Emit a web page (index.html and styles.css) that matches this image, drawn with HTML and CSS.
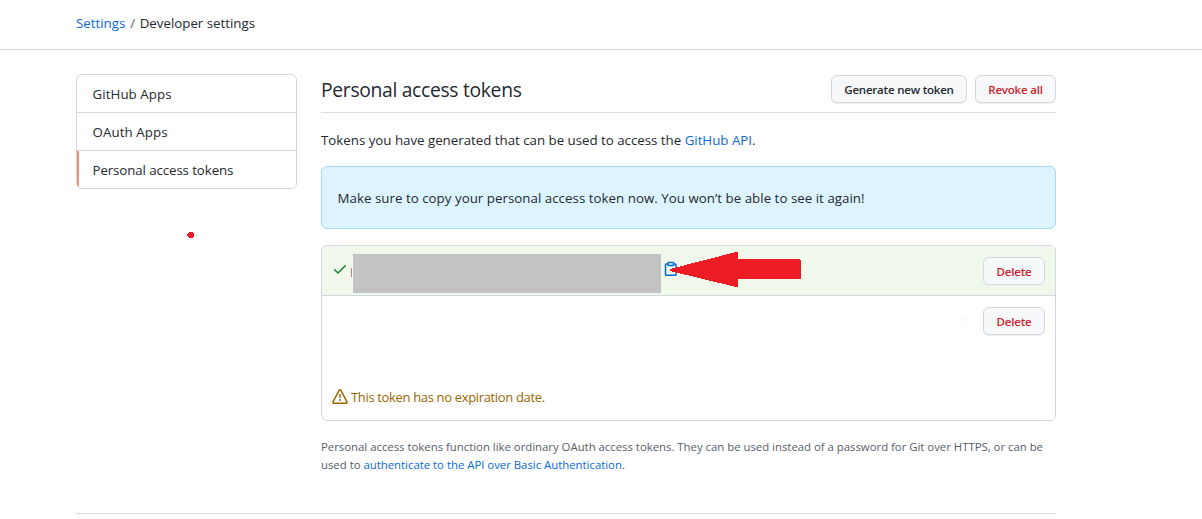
FILE: index.html
```html
<!DOCTYPE html>
<html lang="en">
<head>
<meta charset="utf-8">
<title>Personal access tokens</title>
<link rel="stylesheet" href="styles.css">
</head>
<body>
<header class="crumbs"><a class="crumb-link">Settings</a><span class="slash">/</span><span class="crumb-current">Developer settings</span></header>
<div class="layout">
  <nav class="menu">
    <a class="menu-item">GitHub Apps</a>
    <a class="menu-item">OAuth Apps</a>
    <a class="menu-item selected">Personal access tokens</a>
  </nav>
  <main class="content">
    <div class="subhead">
      <h2 class="title"><span>Personal access tokens</span></h2>
      <div class="actions">
        <button class="btn generate">Generate new token</button>
        <button class="btn danger revoke">Revoke all</button>
      </div>
    </div>
    <p class="intro"><span>Tokens you have generated that can be used to access the <a>GitHub API</a>.</span></p>
    <div class="flash"><span>Make sure to copy your personal access token now. You won’t be able to see it again!</span></div>
    <div class="tokens">
      <div class="token new">
        <svg class="check" width="16" height="16" viewBox="0 0 16 16"><path fill="#1a7f37" d="M13.78 4.22a.75.75 0 010 1.06l-7.25 7.25a.75.75 0 01-1.06 0L2.22 9.28a.75.75 0 011.06-1.06L6 10.94l6.72-6.72a.75.75 0 011.06 0z"/></svg>
        <i class="remnant"></i>
        <div class="redaction"></div>
        <svg class="clip" width="14" height="16" viewBox="0 0 14 16" fill="none" stroke="#0969da" stroke-width="1.5"><path d="M3.5 3H2.2Q1.5 3 1.5 3.8V13.4Q1.5 14.2 2.2 14.2H11.2Q12 14.2 12 13.4V3.8Q12 3 11.2 3H10"/><rect x="4" y="1.4" width="5.6" height="3.2" rx=".5"/></svg>
        <button class="btn danger delete">Delete</button>
      </div>
      <div class="token old">
        <div class="old-top"><span class="trace"><i></i><i></i></span><button class="btn danger delete">Delete</button></div>
        <div class="expiry">
          <svg width="16" height="16" viewBox="0 0 16 16"><path fill="#9a6700" fill-rule="evenodd" d="M8.22 1.754a.25.25 0 00-.44 0L1.698 13.132a.25.25 0 00.22.368h12.164a.25.25 0 00.22-.368L8.22 1.754zm-1.763-.707c.659-1.234 2.427-1.234 3.086 0l6.082 11.378A1.75 1.75 0 0114.082 15H1.918a1.75 1.75 0 01-1.543-2.575L6.457 1.047zM9 11a1 1 0 11-2 0 1 1 0 012 0zm-.25-5.25a.75.75 0 00-1.5 0v2.5a.75.75 0 001.5 0v-2.5z"/></svg>
          <span>This token has no expiration date.</span>
        </div>
      </div>
    </div>
    <p class="note"><span class="note-a">Personal access tokens function like ordinary OAuth access tokens. They can be used instead of a password for Git over HTTPS, or can be</span><br><span class="note-b">used to <a>authenticate to the API over Basic Authentication</a>.</span></p>
  </main>
</div>
<div class="footer-rule"></div>
<svg class="arrow" width="132" height="36" viewBox="0 0 132 36"><path fill="#ed1c24" shape-rendering="crispEdges" d="M0 17L66 0H68V7H130L131 9V27H68V35H66L0 19Z"/></svg>
<svg class="dot" width="7" height="6" viewBox="0 0 7 6"><path fill="#ed1c24" shape-rendering="crispEdges" d="M2 0H6V1H7V5H6V6H2V5H1V4H0V2H1V1H2Z"/></svg>
</body>
</html>
```
FILE: styles.css
```css
* { box-sizing: border-box; }
body { margin: 0; height: 519px; overflow: hidden; background: #fff; color: #24292f; font: 13.3px/21px "Open Sans", "Noto Sans", sans-serif; white-space: nowrap; }
a { color: #0969da; }
p, h2 { margin: 0; }
svg { display: block; flex: none; }
.crumbs { height: 50px; padding: 13px 0 0 76px; border-bottom: 1px solid #d0d7de; display: flex; letter-spacing: -.01px; }
.slash { width: 14.5px; padding-left: 5px; color: #57606a; }
.layout { display: flex; gap: 24px; padding: 24px 0 0 76px; height: 463px; }
.menu { width: 221px; height: 115px; border: 1px solid #d0d7de; border-radius: 6px; overflow: hidden; letter-spacing: -.1px; }
.menu-item { display: block; height: 38px; padding: 9px 15.5px 0; color: #24292f; border-bottom: 1px solid #d0d7de; }
.menu-item:not(.selected) { letter-spacing: .08px; }
.menu-item.selected { border-bottom: 0; box-shadow: inset 2px 0 #fd8c73; }
.content { width: 735px; }
.subhead { height: 39px; display: flex; justify-content: space-between; border-bottom: 1px solid #d8dee4; }
.title { font-size: 19.3px; line-height: 32px; font-weight: 400; letter-spacing: -.31px; }
.actions { display: flex; gap: 8px; padding-top: 1px; }
.btn { height: 28px; padding: 1px 0 0; border: 1px solid #d5d8da; border-radius: 6px; background: #f6f8fa; box-shadow: 0 1px #f0f1f2; color: #24292f; font: 600 11.5px/20px "Open Sans", "Noto Sans", sans-serif; letter-spacing: -.2px; }
.danger { color: #cf222e; }
.generate { width: 136px; }
.revoke { width: 81px; }
.delete { width: 62px; }
.intro { padding-top: 17px; height: 53px; letter-spacing: -.01px; }
.flash { height: 63px; padding: 21px 15.5px; background: #ddf4ff; border: 1px solid #a5d7fb; border-radius: 6px; letter-spacing: .03px; }
.tokens { height: 176px; margin-top: 16px; border: 1px solid #d0d7de; border-radius: 6px; overflow: hidden; }
.new { height: 50px; display: flex; background: #eff8eb; border-bottom: 1px solid #d0d7de; padding: 0 10px; }
.check { margin-top: 15px; }
.remnant { width: 1px; height: 9px; margin: 22px 0 0 3px; background: #b08082; }
.redaction { width: 308px; height: 39px; margin: 8px 0 0 1px; background: #c3c3c3; }
.clip { margin: 15px 0 0 3px; }
.new .delete { margin: 11px 0 0 auto; }
.old-top { height: 93px; padding: 11px 10px 0; display: flex; justify-content: flex-end; }
.trace { display: grid; align-content: start; gap: 4px; margin: 12px 17px 0 0; }
.trace i { width: 1px; height: 1px; background: #b9d7ee; }
.expiry { display: flex; gap: 3px; padding-left: 10px; color: #9a6700; font-size: 13px; line-height: 17px; letter-spacing: -.34px; }
.note { margin-top: 17px; font-size: 11.4px; line-height: 18px; color: #57606a; letter-spacing: -.02px; }
.footer-rule { width: 980px; height: 1px; margin-left: 76px; background: #d8dee4; }
/* markup drawn over the page */
.arrow { position: absolute; left: 670px; top: 252px; }
.dot { position: absolute; left: 187px; top: 232px; }
```
